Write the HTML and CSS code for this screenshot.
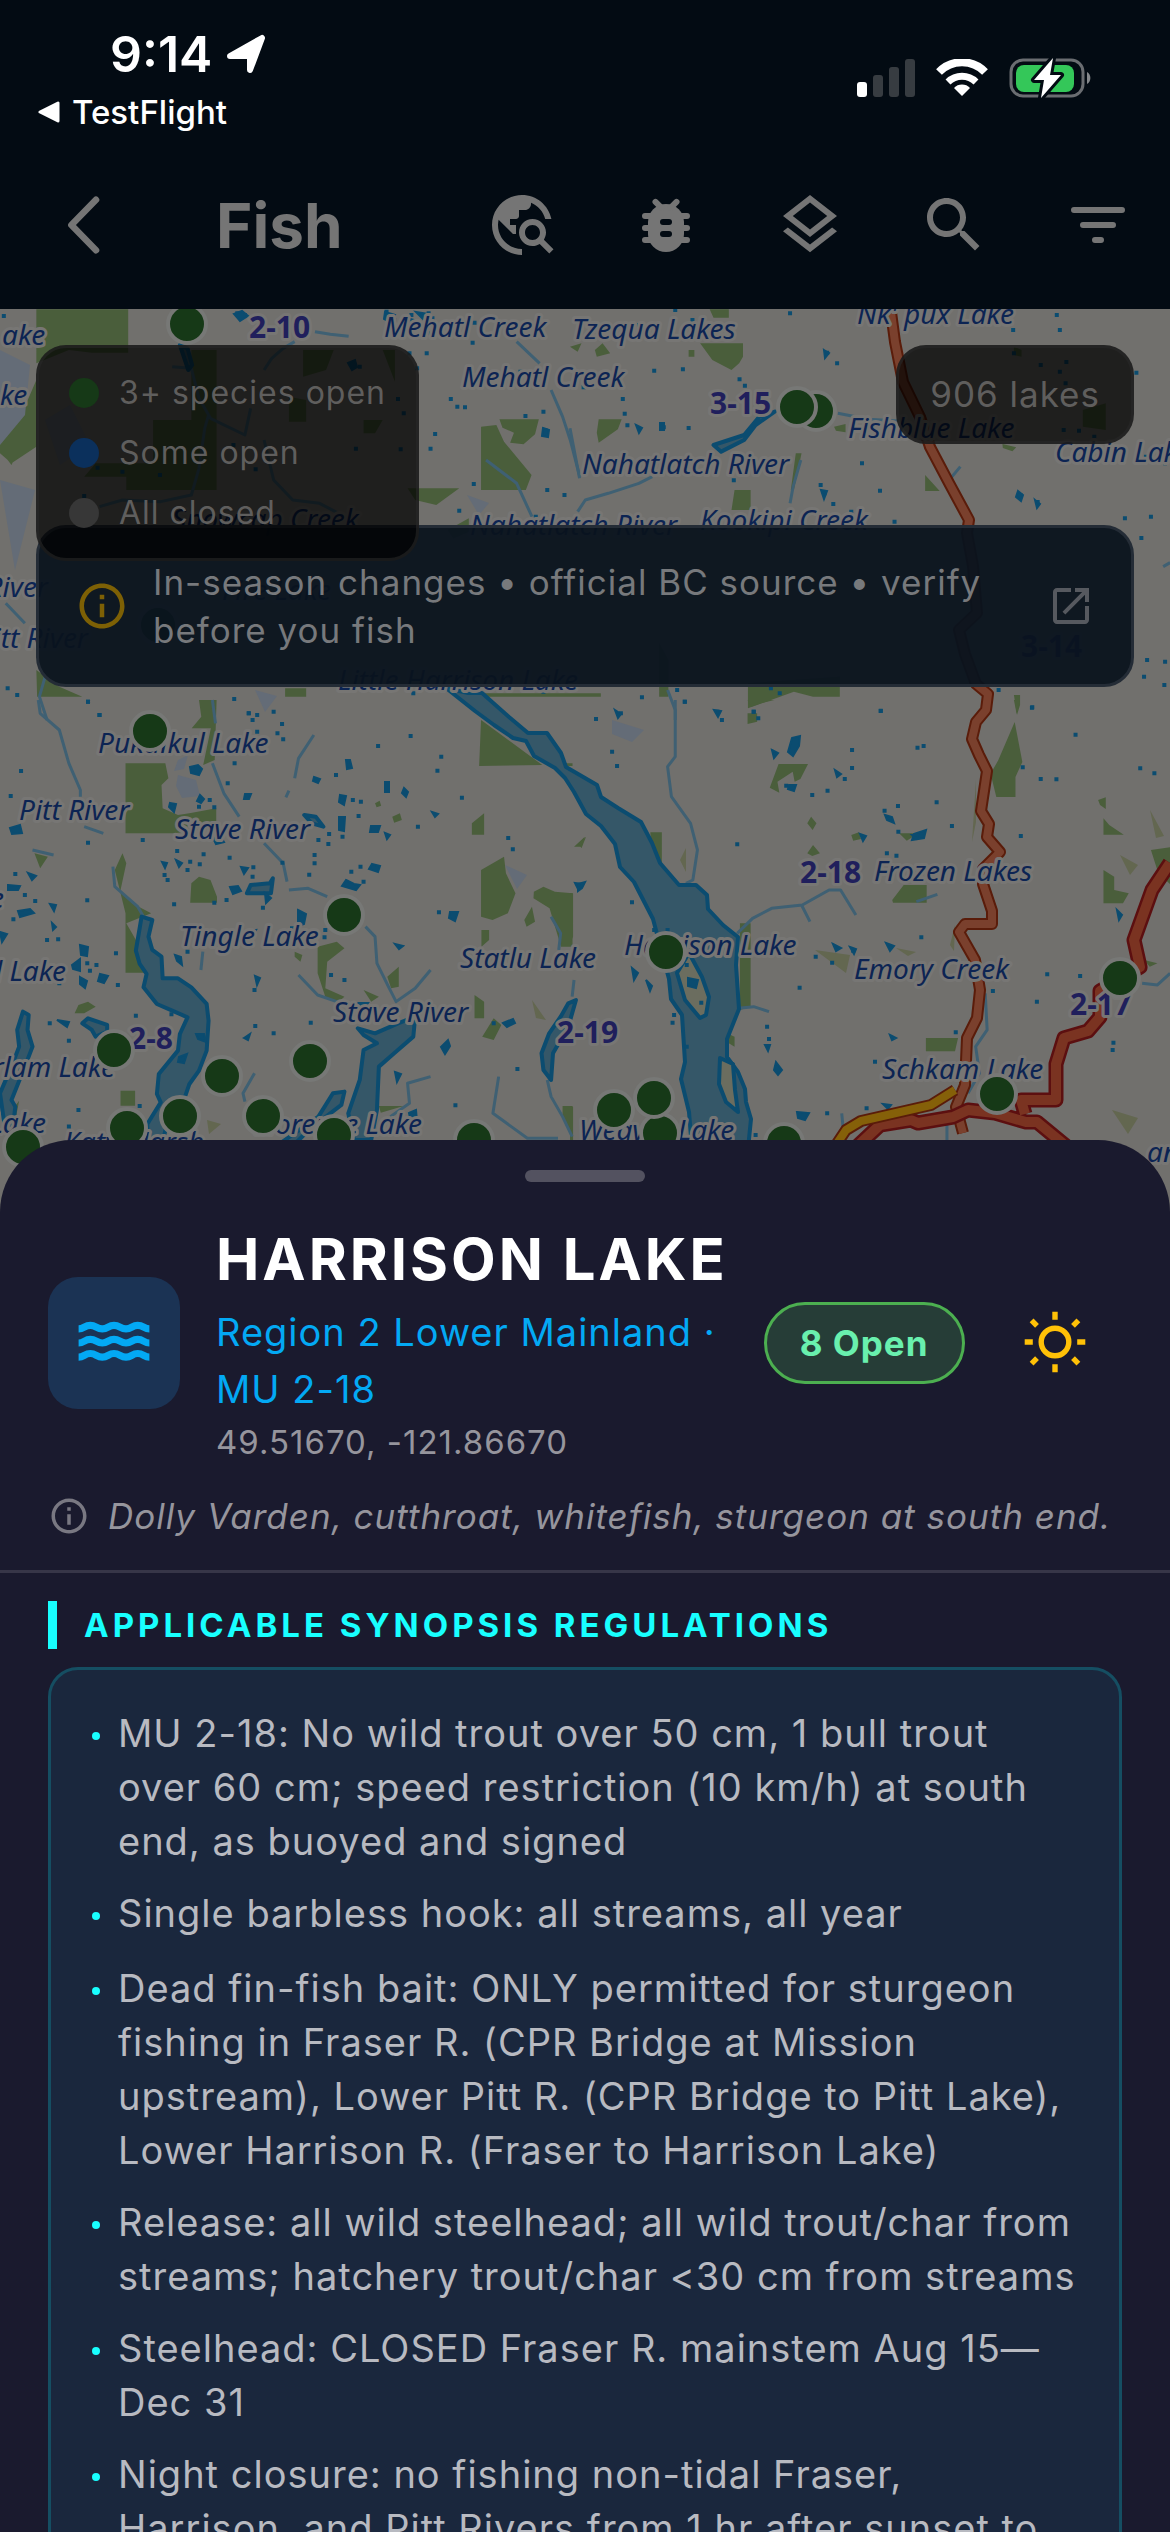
FILE: index.html
```html
<!DOCTYPE html>
<html lang="en">
<head>
  <meta charset="UTF-8" />
  <meta name="viewport" content="width=device-width, initial-scale=1.0" />
  <title>Fish</title>
  <link rel="stylesheet" href="styles.css">
</head>
<body>
  <div class="screen">
    <div class="status-bar">
      <div class="status-left">
        <div class="clock">
          <span>9:14</span>
          <svg width="40" height="40" viewBox="0 0 40 40"><path d="M36 4 24 36V22H4z" fill="#fff" stroke="#fff" stroke-width="6" stroke-linejoin="round"/></svg>
        </div>
        <a class="back-app" href="#">
          <svg width="22" height="22" viewBox="0 0 22 22"><path d="M2 11 20 2v18z" fill="#fff" stroke="#fff" stroke-width="3" stroke-linejoin="round"/></svg>
          <span>TestFlight</span>
        </a>
      </div>
      <div class="status-right">
        <svg width="58" height="38" viewBox="0 0 58 38">
          <rect x="0" y="23" width="10" height="15" rx="3" fill="#fff"/>
          <rect x="16" y="16" width="10" height="22" rx="3" fill="#373c41"/>
          <rect x="32" y="8" width="10" height="30" rx="3" fill="#373c41"/>
          <rect x="48" y="0" width="10" height="38" rx="3" fill="#373c41"/>
        </svg>
        <svg width="52" height="38" viewBox="0 0 52 38" fill="none" stroke="#fff">
          <path d="M3 13a32 32 0 0 1 46 0" stroke-width="8"/>
          <path d="M12 23a20 20 0 0 1 28 0" stroke-width="7"/>
          <path d="M26 37 18 29a11 11 0 0 1 16 0z" fill="#fff" stroke="none"/>
        </svg>
        <svg width="83" height="42" viewBox="0 0 83 42">
          <rect x="2" y="3" width="72" height="36" rx="12" fill="none" stroke="#6a6d71" stroke-width="3"/>
          <path d="M78 15a7 7 0 0 1 0 12z" fill="#85888b"/>
          <rect x="7" y="8" width="58" height="27" rx="8" fill="#34c759"/>
          <path d="M44 1 25 23h10l-3 18 20-23H41z" fill="#fff" stroke="#030b13" stroke-width="6" paint-order="stroke" stroke-linejoin="round"/>
        </svg>
      </div>
    </div>

    <header class="app-bar">
      <button class="icon-btn back" aria-label="Back">
        <svg viewBox="0 0 24 24"><path d="M16 3.600 7.800 12l8.200 8.400" fill="none" stroke="currentColor" stroke-width="2.200" stroke-linecap="round" stroke-linejoin="round"/></svg>
      </button>
      <h1>Fish</h1>
      <button class="icon-btn" aria-label="Explore">
        <svg viewBox="0 0 24 24"><path d="M19.300 16.900c.4-.7.7-1.500.7-2.400 0-2.500-2-4.500-4.500-4.500S11 12 11 14.500s2 4.500 4.500 4.500c.9 0 1.700-.3 2.400-.7l3.200 3.200 1.400-1.400-3.200-3.200zm-3.800.1c-1.400 0-2.500-1.100-2.500-2.500s1.100-2.500 2.500-2.500 2.500 1.100 2.500 2.500-1.100 2.500-2.500 2.500zM12 20v2C6.480 22 2 17.520 2 12S6.480 2 12 2c4.840 0 8.870 3.440 9.800 8h-2.070c-.64-2.460-2.400-4.470-4.730-5.410V5c0 1.100-.9 2-2 2h-2v2c0 .55-.45 1-1 1H8v2h2v3H9l-4.790-4.790C4.080 10.790 4 11.380 4 12c0 4.410 3.590 8 8 8z"/></svg>
      </button>
      <button class="icon-btn" aria-label="Report a bug">
        <svg viewBox="0 0 24 24">
          <path d="M12 5a6 6 0 0 1 6 6v4a6 6 0 0 1-12 0v-4a6 6 0 0 1 6-6z"/>
          <path d="M5 9h14M5 13h14M5 17h14M8.500 4.300l2 2M15.500 4.300l-2 2" fill="none" stroke="currentColor" stroke-width="2" stroke-linecap="round"/>
          <rect x="10" y="10" width="4" height="2" rx="1" fill="#030b13"/>
          <rect x="10" y="14" width="4" height="2" rx="1" fill="#030b13"/>
        </svg>
      </button>
      <button class="icon-btn" aria-label="Layers">
        <svg viewBox="0 0 24 24"><path d="M11.990 18.540l-7.370-5.730L3 14.070l9 7 9-7-1.630-1.270zM12 16l7.360-5.730L21 9l-9-7-9 7 1.630 1.270L12 16zm0-11.470L17.740 9 12 13.470 6.260 9 12 4.530z"/></svg>
      </button>
      <button class="icon-btn" aria-label="Search">
        <svg viewBox="0 0 24 24"><path d="M15.500 14h-.79l-.28-.27C15.410 12.590 16 11.110 16 9.500 16 5.910 13.090 3 9.500 3S3 5.910 3 9.500 5.910 16 9.500 16c1.610 0 3.090-.59 4.230-1.570l.27.28v.79l5 4.990L20.490 19l-4.990-5zm-6 0C7.010 14 5 11.990 5 9.500S7.010 5 9.500 5 14 7.010 14 9.500 11.990 14 9.500 14z"/></svg>
      </button>
      <button class="icon-btn" aria-label="Filter">
        <svg viewBox="0 0 24 24"><path d="M4 7h16M7 12h10M11 17h2" fill="none" stroke="currentColor" stroke-width="2" stroke-linecap="round"/></svg>
      </button>
    </header>

    <main class="map">
      <svg class="map-canvas" viewBox="0 309 1170 903" preserveAspectRatio="xMidYMin slice">
        <defs>
          <path id="hwy-canyon" d="M891 312l4 30 8 40 17 35 10 30 19 36 20 37-2 13 6 33 4 47-18 17 6 24 11 30 12 10-2 16-10 12-4 17 7 16 8 16-6 40 8 13-2 13 13 15-17 17v15l9 27v13h-27l-6 8 16 28 5 30-3 28-10 20-2 47-9 22 7 26"/>
          <path id="hwy-trunk" d="M1170 863l-18 27-18 50 6 27-40 24v26l-12 14-24 7-8 26v36h-35l4 14M848 1155l32-30 31-5 7 3 35-6 15-7 27 3 31 9h11l40 33"/>
          <path id="hwy-yellow" d="M832 1151l14-21 15-9 70-16 24-15"/>
        </defs>

        <!-- parks and forest -->
        <g class="park">
          <g transform="translate(0 300) scale(.3827 .3333)">
            <path d="M95 28h240v130H240l-60-8-85 40zM0 430l50-70 45-120v200l-65 50-30-30zM500 150h66v420H330v-40h-110l30-40h150v-130h100zM792 150h80l-20 60-60 20zM755 290l45 10v65h-45zM950 360h50l-20 40h-30zM1000 150h32v95zM1257 380l40-5 20 50 72 100-15 45h-117zM1305 358h103l-10 45-30 30-35-5 10-30-30-15zM1065 565h135l-60 50-55-15zM0 450l40 20-10 25zM1170 690l55-35v40l-40 20zM95 1110l60 50 60 30H97zM1180 1180h390v10h-360zM745 1165h55v25h-55z"/>
          </g>
          <g transform="translate(570 300) scale(.3827 .3333)">
            <path d="M340 130h112v40l-10 20-20 20-50-30zM75 358h60l-10 30-50 40-5-30zM590 460h15l-20 110h-8zM430 570h42v60h-50zM928 525l38 48h-38zM1340 330l60-20v80l-60-10zM365 28h50v25h-40zM0 140l30-10-10 25zM65 150l20-20 20 30-35 10zM310 150h15v20h-15zM690 380l30-8v25l-25-5zM233 1030l24 50v110h-24zM465 1150l120-10 120-10v60h-70l-50-15-120 50zM1160 1185h16v30l-8 30zM1130 432l36 10-10 12-25-10zM1160 140l20 10v20l-20-5z"/>
          </g>
          <g transform="translate(0 700) scale(.3827 .3333)">
            <path d="M328 190h104l8 45-18 20 3 70 40 20 30-5 70-15v60l-110 15H328zM520 0h46l-5 180-30 15 20-110h-50l25-35zM1257 60l160 135-165 3zM1470 190h26v8h-16zM300 510l20-50 10 30-15 80 30 40 50 30-65 30 55 110-5 38H328V640zM500 550l20-20 30 10 17 50v18h-70zM1257 510l60-40 5 50 25 60-20 60-40 20-30-10zM1258 690h20v30l-20 20zM1395 575l25-15 30 15 46 5v160h-30l-30-115-42-30zM1233 370l32-30v64h-32zM195 940l10-25 25-10 20 15-30 20zM830 740l50-15 20 20-45 40-5 80 50 25-20 20-30-20-20-70zM1012 830l30-30v60l-20 5zM950 870l40 20-20 15zM1240 885l25 20v50h-25zM1260 1010l30-55 20 20-20 45zM315 1172h38v45h-38zM990 1218h65l-60 20zM1470 1218h26v95l-26-60zM25 1240l25-38-10 60zM1025 350l20-10 5 20-20 8zM980 310l12-8 4 15-12 5zM1500 440l28-30-8 30zM90 460l35 10-20 35zM770 755l20 10-5 20-15-15zM1370 660l20-40 8 45-22 15z"/>
          </g>
          <g transform="translate(570 700) scale(.3827 .3333)">
            <path d="M1162 66l20 120-18 45v60h-50l-15-70 20-40zM210 397h30v95l-28-60zM545 192h77l-20 45-15 8-5-30-40 30 5 33-25-15zM464 0h70l-35 10-25 10zM464 40h25v25l-25 7zM444 670h28v250l-28 10zM842 600l30-45h60v53h-88zM930 1014h84l-8 40h-76zM1394 355l15 20 38 29h-53zM1394 510l28 20v40l38 10-15 30h-51zM1380 300l20-8v35l-15-12zM620 370l10-20 14 20-10 20zM735 405l20-8 5 20-20 5zM620 460l15-25 18 25-20 8zM0 580h8v130l-8 20zM0 1220h8v100H0zM860 400h50l-30 22zM1518 450l50-8v110l-30-30zM1500 780l35 10-20 10zM1160 0h15l-8 42zM410 1000l20 10v30l-15-10zM22 430l20-20-12 35z"/>
          </g>
        </g>

        <!-- ice fields and bare ground -->
        <g class="ice">
          <path d="M0 350l30 15-5 50-25 30zM0 480l35 10-20 80zM45 420l25-15 20 40-30 20zM178 760l10-5-4 14-10 2zM178 775l18 5 4 16-18 2-6-12zM505 865l22 10-10 14zM612 720l32 10-12 12-20-8zM467 495l22 8-10 12zM255 690l22 6-12 16z"/>
        </g>
        <g class="scrub">
          <path d="M815 950l35 5-4 18zM675 965l18 22-4 20zM532 1000l14 20-10-2zM1150 810l14 26-8 2zM1120 855l18 10-8 10zM976 780l-4 62 4-20zM955 925l-5 20 4 6zM1112 1110l26 8-10 16zM207 1120l14 4-12 10zM680 860l6-12v24zM896 948l20 4-8 4z"/>
        </g>

        <!-- creeks -->
        <g class="creek">
          <g transform="translate(0 300) scale(.3827 .3333)">
            <path d="M823 95l40 8 48 6M770 125l-30 20-30 30-20 35M450 200l50 5M260 620l60-20 100 5 80-20 20-80 15-120 10-40M500 205l20 90 30 60 90 50 15-80M690 420l25 120 50 60 70 10 50 30M1350 125l60 65M1440 270l30 80 20 70 25 110M1270 480l80 70 40 100M118 1130l-15 60 20 70M15 910l50 60"/>
          </g>
          <g transform="translate(570 300) scale(.3827 .3333)">
            <path d="M0 385l25 150M20 635l20-35 60-20 80-30 35-20M700 340l80 18 80 5M603 480l-20 80-8 50M980 555l40-55M1550 800l18-12M255 1170l20 60v30"/>
          </g>
          <g transform="translate(0 700) scale(.3827 .3333)">
            <path d="M100 0l5 40 50 50 25 100 30 80v20M220 380l50 20M555 190l30 90 40 70M690 430l50 60 10 55M755 570l50-5 50 25M820 105l-40 70-10 60M755 272l-8 20M295 500l5 60 60 60 30 60M85 450l55 15M780 825l50 60 50 20M955 680l25 30 5 80 30 70 20 45 50-40 40-55M1500 840l-5 50M1430 1140l10 50 30 60 25 60M1303 1130l-15 110 90 75h80M665 1120l-30 60 5 25M1125 1130l-60 20 5 60-50 40M530 755l-5 55M1440 650l25 50-5 50M555 0l8 70"/>
          </g>
          <g transform="translate(570 700) scale(.3827 .3333)">
            <path d="M275 0v170l-20 30 10 90 50 80 18 80-12 90-18 10M437 700l40-45 50-30 80-10 70-45h30l40 75M605 615l22 50M440 925l40-5 40 15M905 605l55-22M1495 850l40 5 33-35M710 1240l5 60M985 1270v50M1085 880l5 110-30 50 10 80-30 60"/>
          </g>
        </g>

        <!-- lakes -->
        <g class="lake">
          <path d="M468 693h14l27 24 19 16h19l14 20 5 14 31 18 4 12 17 11 23 14 11 21 8 20 19 22h17l11 10 1 14 15 16 15 12-2 28 3 44-12 30v18l11 15 7 17 1 13 5 17-3 30h-56l-3-37-8-33 4-17-3-47-11-16-2-20-8-30-8-30-19-37-14-15-5-23-14-18-15-12-12-22-9-14-10-10-21-12-8-15-13-3-19-13-19-14-29-23z"/>
          <path class="island" d="M689 953l13 24 7 20-3 18-6 3-15-18-8-27zM720 1058l13 6 2 26 3 22-12-10-7-18z"/>
          <g transform="translate(0 700) scale(.3827 .3333)">
            <path d="M370 650l28 10-10 50 10 40 24 20 3 65h40l35 27 40 50 5 50-5 90-20 60-25 40-15 50-40 50-20 100h-35v-80l35-65-10-25 5-60 50-70 5-50 20-50-40-20-40-20-35-50 8-40-18-30-10-40z"/>
            <path d="M935 985l45 15 60-30 45-20-5 60-50 50-40 40-5 130-15 90h-45l-15-80 30-100 10-90 35-20-35-25z"/>
            <path d="M60 935l15 10-3 45 13 50-20 60-35 100 10 20-10 100-20-60-10-80 30-80 20-60-5-50z"/>
            <path d="M1485 910l20-10-15 60-20 50-25 50-5 80-20-30-5-50 20-60 30-50z"/>
            <path d="M870 1180l30-5-8 40-80 70-40 45h-40l100-80zM215 970l15-15 50 20v20l-30 15-10-20zM645 580l10-25 50-5 8-15-5 45zM795 345l30 5 20 30-30-10z"/>
          </g>
          <g transform="translate(570 300) scale(.3827 .3333)">
            <path d="M375 435l80-30 40-55 40-15-50 40-30 45-60 35z"/>
          </g>
          <g transform="translate(0 300) scale(.3827 .3333)">
            <path d="M470 135l20 10 12 50-10 15z"/>
          </g>
        </g>

        <!-- ponds -->
        <g class="pond">
          <g transform="translate(0 300) scale(.3827 .3333)">
            <path d="M10 48h0M620 40h0M640 45h0M1010 35h0M1030 60h0M1075 45h0M1120 40h0M1130 55h0M1125 100h0M1240 68h0M1235 128h0M1115 160h0M1070 160h0M1090 205h0M925 190h0M940 200h0M1040 297h0M1055 340h0M1230 205h0M1178 297h0M1195 320h0M1215 322h0M1137 402h0M1125 446h0M1047 448h0M930 446h0M1373 348h0M1420 335h0M1425 390h0M1238 552h0M1430 570h0M1475 585h0M1200 632h0M1400 650h0M1525 262h0M1360 215h0M45 290h0M320 515h0M418 525h0M255 503h0M668 508h0M610 435h0M220 588h0M20 1165h0M45 1185h0M230 1205h0M260 1245h0M650 1240h0M612 1197h0M715 1235h0M1080 1180h0M1420 1175h0"/>
          </g>
          <g transform="translate(570 300) scale(.3827 .3333)">
            <path d="M180 75h0M220 80h0M262 95h0M275 30h0M320 60h0M575 40h0M672 158h0M698 190h0M220 212h0M295 208h0M443 238h0M457 257h0M138 297h0M143 341h0M150 376h0M245 382h0M310 384h0M428 541h0M655 555h0M665 580h0M688 612h0M700 650h0M735 635h0M848 665h0M810 572h0M763 490h0M1158 90h0M1280 90h0M1272 45h0M950 40h0M1160 160h0M1230 195h0M1297 186h0M1280 215h0M1295 250h0M1480 218h0M1290 390h0M1330 392h0M1370 410h0M1450 450h0M1505 470h0M1555 490h0M1177 585h0M1222 606h0M1450 655h0M1518 650h0M1493 714h0M1508 1080h0M1555 1085h0M1500 1130h0M1120 1170h0M1553 1155h0M1207 1223h0M812 1232h0M525 1165h0M548 1180h0M280 1170h0M300 1205h0M188 1192h0M133 1240h0M480 1235h0M385 1235h0"/>
          </g>
          <g transform="translate(0 700) scale(.3827 .3333)">
            <path d="M230 5h0M260 45h0M650 40h0M672 45h0M660 60h0M672 95h0M737 72h0M725 100h0M740 118h0M988 138h0M1073 108h0M1153 170h0M1143 212h0M1207 293h0M878 225h0M613 190h0M595 250h0M55 213h0M28 288h0M548 300h0M520 320h0M560 322h0M922 300h0M943 305h0M937 348h0M860 402h0M858 432h0M895 410h0M832 420h0M1092 380h0M230 428h0M373 420h0M463 453h0M497 485h0M522 493h0M532 463h0M430 525h0M438 540h0M490 510h0M600 473h0M660 530h0M662 502h0M822 465h0M822 490h0M808 524h0M738 488h0M918 515h0M942 500h0M950 545h0M1340 448h0M1328 414h0M40 522h0M65 585h0M92 603h0M35 658h0M228 601h0M455 613h0M560 608h0M592 600h0M687 623h0M850 690h0M848 712h0M763 685h0M1147 637h0M123 720h0M152 718h0M303 760h0M228 790h0M252 795h0M235 812h0M308 855h0M155 850h0M490 755h0M665 870h0M865 825h0M900 840h0M130 970h0M180 1022h0M355 947h0M448 943h0M667 978h0M715 1000h0M475 1075h0M812 968h0M1290 970h0M1352 1107h0M1190 1216h0M205 1230h0M180 1280h0M365 1218h0M190 1300h0M1080 1260h0M1190 940h0"/>
          </g>
          <g transform="translate(570 700) scale(.3827 .3333)">
            <path d="M397 60h0M480 35h0M492 55h0M300 5h0M68 57h0M110 155h0M123 198h0M737 150h0M718 237h0M737 204h0M908 143h0M924 138h0M812 33h0M565 257h0M673 272h0M633 285h0M958 307h0M822 332h0M857 318h0M858 395h0M998 378h0M437 433h0M162 607h0M1178 408h0M1183 202h0M1230 237h0M1271 238h0M1321 104h0M1490 205h0M1527 220h0M1208 22h0M918 712h0M740 752h0M685 788h0M600 863h0M642 770h0M1333 828h0M1247 823h0M1105 873h0M1220 905h0M1008 997h0M797 1085h0M1420 1028h0M1418 1050h0M515 980h0M520 1017h0M828 460h0M853 467h0M672 1240h0M775 1225h0M755 1263h0M990 1238h0M485 1305h0M220 690h0M255 690h0M305 795h0M343 908h0M272 945h0M268 968h0M305 1040h0"/>
          </g>
        </g>
        <g class="tarn">
          <path d="M234 314l8-3 6 5-8 5zM385 312l10 3-3 8-8-4zM406 318l8 2-2 6zM416 312l12 2-5 5zM543 428l6 2-1 7-6-1zM348 363l7-3 2 7-5 3zM636 425l6 3-3 5zM640 327l7 2-2 5zM824 350l5 3-4 5zM821 490l6 1-3 8zM1018 491l5 4-2 6-5-4zM1035 500l5 4-3 4zM660 423l4 0v7h-4z"/>
          <path d="M190 767l8-2 4 4-3 6-8-2zM346 760h4l2 8-5 1zM314 777l6 2-2 4-5-2zM170 803l6 1-2 8-5-5zM200 795l4 4-3 4-4-2zM245 794h6l-2 5-5 0zM340 795l6 1-2 9-5-3zM385 782h4v10h-4zM404 788l4 4-2 5-4-4zM339 817h6l-1 14-5-1zM371 826h9l-2 6-8 0zM385 833l5 2-3 4zM432 812l6 2-3 3zM10 828l10-3 2 8-10 1zM213 838l8-1 3 5-8 2zM162 862l5 1-2 5zM176 860l6 3-3 4zM241 867l7 1-4 6zM372 864l8 2-2 6-9-3zM346 880l8 4 6 1-4 5-14-4zM578 884l7-2-3 6-4 3zM28 873l8 3-4 4zM8 885l12 1-2 4-10 0zM50 904l6 1-2 6zM18 911l12-2 4 4-14 4zM230 887l8-1 3 5-8 3zM265 893l6 5-5 5zM298 910l8 4-2 10-6 2zM52 923l4 4-3 3zM240 933l16-3-6 12-10 0zM0 932l7 2-5 8zM80 945l8 2-1 9-6-1zM72 965l8-6v12l-7-2zM100 974l8 2-4 7-6-2zM80 977l7 4-2 7-5-4zM175 955l6 2 1 8-5-4zM255 976l5 2-3 7zM450 912l8 0-3 9-6-3zM395 944l8 2-4 3zM57 1020l12 2-2 5zM244 1038l6-4-2 6zM196 1034h8l2 8-8-3zM179 1057l8-3-3 9-6-1zM441 1047l7-7 2 6-5 8zM503 1023l10-4 2 4-8 4zM395 1072l6 2-4 8zM409 1113l7-3 1 12-6 0zM356 1003l12 0-4 6z"/>
          <path d="M792 738l8-2-1 10-6 10-5-4zM772 750l6 3-4 5zM835 770l6 4-4 3zM789 785l7 0-2 6-6-2zM615 710l6 4-3 4zM714 710l7 1-3 6zM885 815l7 2 2 6-7-3zM912 835l6 0-2 4zM914 834l12-4-2 8-12 2zM860 834l6 2-3 5zM575 883l8 1-5 5zM1117 910l5 5-3 5zM886 943l8 3-4 5zM833 944l8 4-5 3zM850 947l6 2-2 5zM975 1010h6l-2 7-5-2zM890 1035l6 3-4 2zM776 1062l6 8-4 5-4-5zM765 1045l5 0-2 6zM797 1112l12 1-4 7-7-2zM883 1104l8 1-3 4zM632 968l6 5-4 7zM646 980l6 6-2 5zM688 978l10 2-2 8-8-2zM960 1070l7-2-1 6-6 0zM1052 1163"/>
        </g>

        <!-- highways: casing first, then fill -->
        <g class="road">
          <use class="casing" href="#hwy-canyon"/>
          <use class="fill" href="#hwy-canyon"/>
          <use class="casing trunk" href="#hwy-trunk"/>
          <use class="fill trunk" href="#hwy-trunk"/>
          <use class="casing" href="#hwy-yellow"/>
          <use class="fill yellow" href="#hwy-yellow"/>
        </g>

        <!-- place labels -->
        <g class="label">
          <text x="2" y="345">ake</text>
          <text x="0" y="405">ke</text>
          <text x="384" y="337">Mehatl Creek</text>
          <text x="572" y="339">Tzequa Lakes</text>
          <text x="857" y="324">Nk' pux Lake</text>
          <text x="462" y="387">Mehatl Creek</text>
          <text x="582" y="474">Nahatlatch River</text>
          <text x="848" y="438">Fishblue Lake</text>
          <text x="1055" y="462">Cabin Lake</text>
          <text x="470" y="535">Nahatlatch River</text>
          <text x="700" y="530">Kookipi Creek</text>
          <text x="172" y="529">Snowcap Creek</text>
          <text x="48" y="597" text-anchor="end">River</text>
          <text x="88" y="648" text-anchor="end">Pitt River</text>
          <text x="222" y="600">Fire Lake</text>
          <text x="338" y="690">Little Harrison Lake</text>
          <text x="98" y="753">Pukulkul Lake</text>
          <text x="19" y="820">Pitt River</text>
          <text x="175" y="839">Stave River</text>
          <text x="-10" y="908">e</text>
          <text x="180" y="946">Tingle Lake</text>
          <text x="66" y="981" text-anchor="end">l Lake</text>
          <text x="460" y="968">Statlu Lake</text>
          <text x="333" y="1022">Stave River</text>
          <text x="115" y="1077" text-anchor="end">rlam Lake</text>
          <text x="46" y="1133" text-anchor="end">Lake</text>
          <text x="422" y="1134" text-anchor="end">Florence Lake</text>
          <text x="64" y="1152">Katy Marsh</text>
          <text x="579" y="1140">Weaver Lake</text>
          <text x="624" y="955">Harrison Lake</text>
          <text x="874" y="881">Frozen Lakes</text>
          <text x="854" y="979">Emory Creek</text>
          <text x="882" y="1079">Schkam Lake</text>
          <text x="1147" y="1162">an</text>
        </g>
        <g class="label unit">
          <text x="249" y="338">2-10</text>
          <text x="710" y="414">3-15</text>
          <text x="1021" y="657">3-14</text>
          <text x="800" y="883">2-18</text>
          <text x="129" y="1049">2-8</text>
          <text x="557" y="1043">2-19</text>
          <text x="1070" y="1015">2-17</text>
        </g>

        <!-- lake pins -->
        <g class="pin">
          <circle cx="187" cy="324" r="19"/>
          <circle cx="816" cy="411" r="19"/>
          <circle cx="797" cy="407" r="19"/>
          <circle cx="158" cy="625" r="19"/>
          <circle cx="150" cy="731" r="19"/>
          <circle cx="344" cy="915" r="19"/>
          <circle cx="114" cy="1050" r="19"/>
          <circle cx="222" cy="1076" r="19"/>
          <circle cx="310" cy="1061" r="19"/>
          <circle cx="127" cy="1128" r="19"/>
          <circle cx="180" cy="1116" r="19"/>
          <circle cx="263" cy="1116" r="19"/>
          <circle cx="334" cy="1135" r="19"/>
          <circle cx="474" cy="1140" r="19"/>
          <circle cx="23" cy="1147" r="19"/>
          <circle cx="666" cy="952" r="19"/>
          <circle cx="1120" cy="978" r="19"/>
          <circle cx="997" cy="1094" r="19"/>
          <circle cx="614" cy="1110" r="19"/>
          <circle cx="660" cy="1133" r="19"/>
          <circle cx="654" cy="1098" r="19"/>
          <circle cx="784" cy="1143" r="19"/>
        </g>
      </svg>

      <a class="notice" href="#">
        <svg class="notice-info" viewBox="0 0 24 24"><path d="M11 7h2v2h-2zm0 4h2v6h-2zm1-9C6.480 2 2 6.480 2 12s4.480 10 10 10 10-4.480 10-10S17.520 2 12 2zm0 18c-4.410 0-8-3.590-8-8s3.590-8 8-8 8 3.590 8 8-3.590 8-8 8z"/></svg>
        <span>In-season changes • official BC source • verify before you fish</span>
        <svg class="notice-open" viewBox="0 0 24 24"><path d="M19 19H5V5h7V3H5c-1.110 0-2 .9-2 2v14c0 1.100.89 2 2 2h14c1.100 0 2-.9 2-2v-7h-2v7zM14 3v2h3.590l-9.830 9.830 1.410 1.410L19 6.410V10h2V3h-7z"/></svg>
      </a>

      <ul class="legend">
        <li><i class="dot green"></i>3+ species open</li>
        <li><i class="dot blue"></i>Some open</li>
        <li><i class="dot grey"></i>All closed</li>
      </ul>
      <div class="count">906 lakes</div>
    </main>

    <section class="sheet">
      <div class="handle"></div>
      <div class="lake-head">
        <div class="lake-icon">
          <svg width="72" height="72" viewBox="0 0 24 24" fill="none" stroke="#03a9f4" stroke-width="2.400">
            <path d="M.2 7.300c1.800 0 2-1.200 3.900-1.200s2.100 1.200 4 1.200 2-1.200 3.900-1.200 2.100 1.200 4 1.200 2-1.200 3.900-1.200 2.100 1.200 3.900 1.200"/>
            <path d="M.2 12c1.800 0 2-1.200 3.900-1.200s2.100 1.200 4 1.200 2-1.200 3.900-1.200 2.100 1.200 4 1.200 2-1.200 3.900-1.200 2.100 1.200 3.900 1.200"/>
            <path d="M.2 16.700c1.800 0 2-1.200 3.900-1.200s2.100 1.200 4 1.200 2-1.200 3.900-1.200 2.100 1.200 4 1.200 2-1.200 3.900-1.200 2.100 1.200 3.900 1.200"/>
          </svg>
        </div>
        <div class="lake-text">
          <h2>HARRISON LAKE</h2>
          <p class="region">Region 2 Lower Mainland · MU 2-18</p>
          <p class="coords">49.51670, -121.86670</p>
        </div>
        <div class="open-badge">8 Open</div>
        <button class="weather" aria-label="Weather">
          <svg width="72" height="72" viewBox="0 0 24 24" fill="none" stroke="#ffc107" stroke-width="1.800">
            <circle cx="12" cy="12" r="4.600"/>
            <path d="M12 1.900v2.700M12 19.400v2.700M1.900 12h2.700M19.400 12h2.700M4.200 4.800l1.800 1.800M18 17.400l1.800 1.800M4.200 19.200l1.800-1.800M18 6.600l1.800-1.800"/>
          </svg>
        </button>
      </div>

      <div class="note">
        <svg width="42" height="42" viewBox="0 0 24 24"><path d="M11 7h2v2h-2zm0 4h2v6h-2zm1-9C6.480 2 2 6.480 2 12s4.480 10 10 10 10-4.480 10-10S17.520 2 12 2zm0 18c-4.410 0-8-3.590-8-8s3.590-8 8-8 8 3.590 8 8-3.590 8-8 8z"/></svg>
        <p>Dolly Varden, cutthroat, whitefish, sturgeon at south end.</p>
      </div>

      <div class="regs">
        <h3>APPLICABLE SYNOPSIS REGULATIONS</h3>
        <ul class="reg-card">
          <li>MU 2-18: No wild trout over 50 cm, 1 bull trout over 60 cm; speed restriction (10 km/h) at south end, as buoyed and signed</li>
          <li>Single barbless hook: all streams, all year</li>
          <li>Dead fin-fish bait: ONLY permitted for sturgeon fishing in Fraser R. (CPR Bridge at Mission upstream), Lower Pitt R. (CPR Bridge to Pitt Lake), Lower Harrison R. (Fraser to Harrison Lake)</li>
          <li>Release: all wild steelhead; all wild trout/char from streams; hatchery trout/char &lt;30 cm from streams</li>
          <li>Steelhead: CLOSED Fraser R. mainstem Aug 15—Dec 31</li>
          <li>Night closure: no fishing non-tidal Fraser, Harrison, and Pitt Rivers from 1 hr after sunset to</li>
        </ul>
      </div>
    </section>
  </div>
</body>
</html>
```

FILE: styles.css
```css
* {
  box-sizing: border-box;
  margin: 0;
  padding: 0;
}

body {
  background: #030b13;
  font-family: Inter, "Liberation Sans", sans-serif;
}

ul {
  list-style: none;
}

button {
  background: none;
  border: none;
  cursor: pointer;
}

a {
  color: inherit;
  text-decoration: none;
}

.screen {
  display: flex;
  flex-direction: column;
  height: 100vh;
  overflow: hidden;
}

/* Status bar */
.status-bar {
  display: flex;
  flex: none;
  justify-content: space-between;
  height: 141px;
  padding: 24px 78px 0 38px;
  color: #fff;
}

.clock {
  display: flex;
  align-items: center;
  gap: 14px;
  padding-left: 72px;
  font-size: 50px;
  font-weight: 600;
  line-height: 60px;
}

.back-app {
  display: flex;
  align-items: center;
  gap: 12px;
  margin-top: 8px;
  font-size: 33px;
  font-weight: 500;
  line-height: 40px;
}

.status-right {
  display: flex;
  align-items: center;
  gap: 21px;
  height: 108px;
}

/* App bar */
.app-bar {
  display: flex;
  flex: none;
  align-items: center;
  height: 168px;
  color: #757575;
}

.app-bar h1 {
  flex: 1;
  font-size: 62px;
  font-weight: 700;
}

.icon-btn {
  display: flex;
  align-items: center;
  justify-content: center;
  width: 144px;
  height: 144px;
  color: #757575;
}

.icon-btn svg {
  width: 72px;
  height: 72px;
  fill: currentColor;
}

.icon-btn.back {
  width: 168px;
  margin-right: 48px;
}

/* Map */
.map {
  position: relative;
  flex: none;
  height: 903px;
  background: #71706d;
}

.map-canvas {
  display: block;
  width: 100%;
  height: 100%;
}

.park {
  fill: #4a5e3b;
}

.ice {
  fill: #646c77;
}

.scrub {
  fill: #636750;
}

.creek path {
  fill: none;
  stroke: #3f6073;
  stroke-width: 3px;
  stroke-linejoin: round;
  vector-effect: non-scaling-stroke;
}

.lake path {
  fill: #355768;
  stroke: #0b4c70;
  stroke-width: 4px;
  stroke-linejoin: round;
  vector-effect: non-scaling-stroke;
}

.lake .island {
  fill: #6b6d5f;
}

.pond path {
  fill: none;
  stroke: #0b4c70;
  stroke-width: 4px;
  stroke-linecap: square;
  vector-effect: non-scaling-stroke;
}

.tarn {
  fill: #0b4c70;
  stroke: #0b4c70;
  stroke-width: 2px;
}

.road use {
  fill: none;
  stroke-linejoin: round;
}

.road .casing {
  stroke: #5a1c0a;
  stroke-width: 12px;
}

.road .fill {
  stroke: #7a402d;
  stroke-width: 8px;
}

.road .casing.trunk {
  stroke: #5c0f10;
  stroke-width: 15px;
}

.road .fill.trunk {
  stroke: #7a3321;
  stroke-width: 10px;
}

.road .fill.yellow {
  stroke: #856009;
}

.label {
  fill: #0c2453;
  stroke: #777674;
  stroke-width: 6px;
  stroke-linejoin: round;
  paint-order: stroke;
  font-family: "Noto Sans", "Open Sans", sans-serif;
  font-size: 28px;
  font-style: italic;
}

.label.unit {
  fill: #201f5c;
  font-size: 30px;
  font-style: normal;
  font-weight: 700;
}

.pin circle {
  fill: #163917;
  stroke: #777876;
  stroke-width: 4px;
}

.notice {
  position: absolute;
  top: 216px;
  left: 36px;
  right: 36px;
  display: flex;
  align-items: center;
  gap: 24px;
  padding: 30px 36px;
  background: rgba(9, 19, 30, 0.95);
  border: 3px solid #242c36;
  border-radius: 30px;
  color: #77797c;
  font-size: 35px;
  letter-spacing: 1px;
  line-height: 48px;
}

.notice span {
  flex: 1;
}

.notice-info {
  flex: none;
  width: 54px;
  height: 54px;
  fill: #7d6005;
}

.notice-open {
  flex: none;
  width: 48px;
  height: 48px;
  fill: #56595f;
}

.legend,
.count {
  position: absolute;
  top: 36px;
  background: rgba(0, 0, 0, 0.72);
  border: 3px solid rgba(40, 40, 40, 0.6);
  border-radius: 30px;
  color: #5f5e5d;
  letter-spacing: 1px;
}

.legend {
  left: 36px;
  display: flex;
  flex-direction: column;
  gap: 18px;
  padding: 24px 30px;
  font-size: 32px;
  line-height: 42px;
}

.legend li {
  display: flex;
  align-items: center;
  gap: 20px;
}

.dot {
  width: 30px;
  height: 30px;
  border-radius: 50%;
}

.dot.green {
  background: #163917;
}

.dot.blue {
  background: #0b305c;
}

.dot.grey {
  background: #373737;
}

.count {
  right: 36px;
  padding: 24px 31px;
  font-size: 35px;
  line-height: 45px;
}

/* Bottom sheet */
.sheet {
  position: relative;
  flex: 1;
  min-height: 0;
  margin-top: -72px;
  padding-top: 30px;
  background: #1a1a2e;
  border-radius: 72px 72px 0 0;
  letter-spacing: 1px;
}

.handle {
  width: 120px;
  height: 12px;
  margin: 0 auto;
  background: #535260;
  border-radius: 6px;
}

.lake-head {
  display: flex;
  align-items: center;
  margin-top: 38px;
  padding: 0 48px;
}

.lake-icon {
  display: flex;
  align-items: center;
  justify-content: center;
  flex: none;
  width: 132px;
  height: 132px;
  margin-right: 36px;
  background: #1b3354;
  border-radius: 30px;
}

.lake-text {
  flex: 1;
}

.lake-text h2 {
  margin-bottom: 6px;
  color: #fff;
  font-size: 58px;
  font-weight: 700;
  letter-spacing: 3px;
  line-height: 78px;
  white-space: nowrap;
}

.region {
  color: #03a9f4;
  font-size: 38px;
  line-height: 57px;
}

.coords {
  color: #96959d;
  font-size: 33px;
  line-height: 48px;
}

.open-badge {
  flex: none;
  margin: 0 18px 0 36px;
  padding: 15px 33px;
  background: #263d37;
  border: 3px solid #4caf50;
  border-radius: 41px;
  color: #69f0ae;
  font-size: 35px;
  font-weight: 700;
  line-height: 46px;
}

.weather {
  flex: none;
  width: 144px;
  height: 144px;
}

.note {
  display: flex;
  align-items: center;
  gap: 18px;
  padding: 26px 48px 30px;
  border-bottom: 3px solid #373648;
  color: #96959d;
}

.note svg {
  flex: none;
  fill: #797882;
}

.note p {
  font-size: 35px;
  font-style: italic;
  line-height: 48px;
  white-space: nowrap;
}

.regs {
  padding: 28px 48px 0;
}

.regs h3 {
  padding-left: 27px;
  border-left: 9px solid #18ffff;
  color: #18ffff;
  font-size: 33px;
  font-weight: 700;
  letter-spacing: 4px;
  line-height: 48px;
}

.reg-card {
  display: flex;
  flex-direction: column;
  gap: 18px;
  margin-top: 18px;
  padding: 36px;
  background: #1a273d;
  border: 3px solid #154e62;
  border-radius: 30px;
}

.reg-card li {
  display: flex;
  color: #b8bac1;
  font-size: 38px;
  line-height: 54px;
}

.reg-card li::before {
  content: "";
  flex: none;
  width: 8px;
  height: 8px;
  margin: 26px 18px 23px 5px;
  background: #18ffff;
  border-radius: 50%;
}
```
